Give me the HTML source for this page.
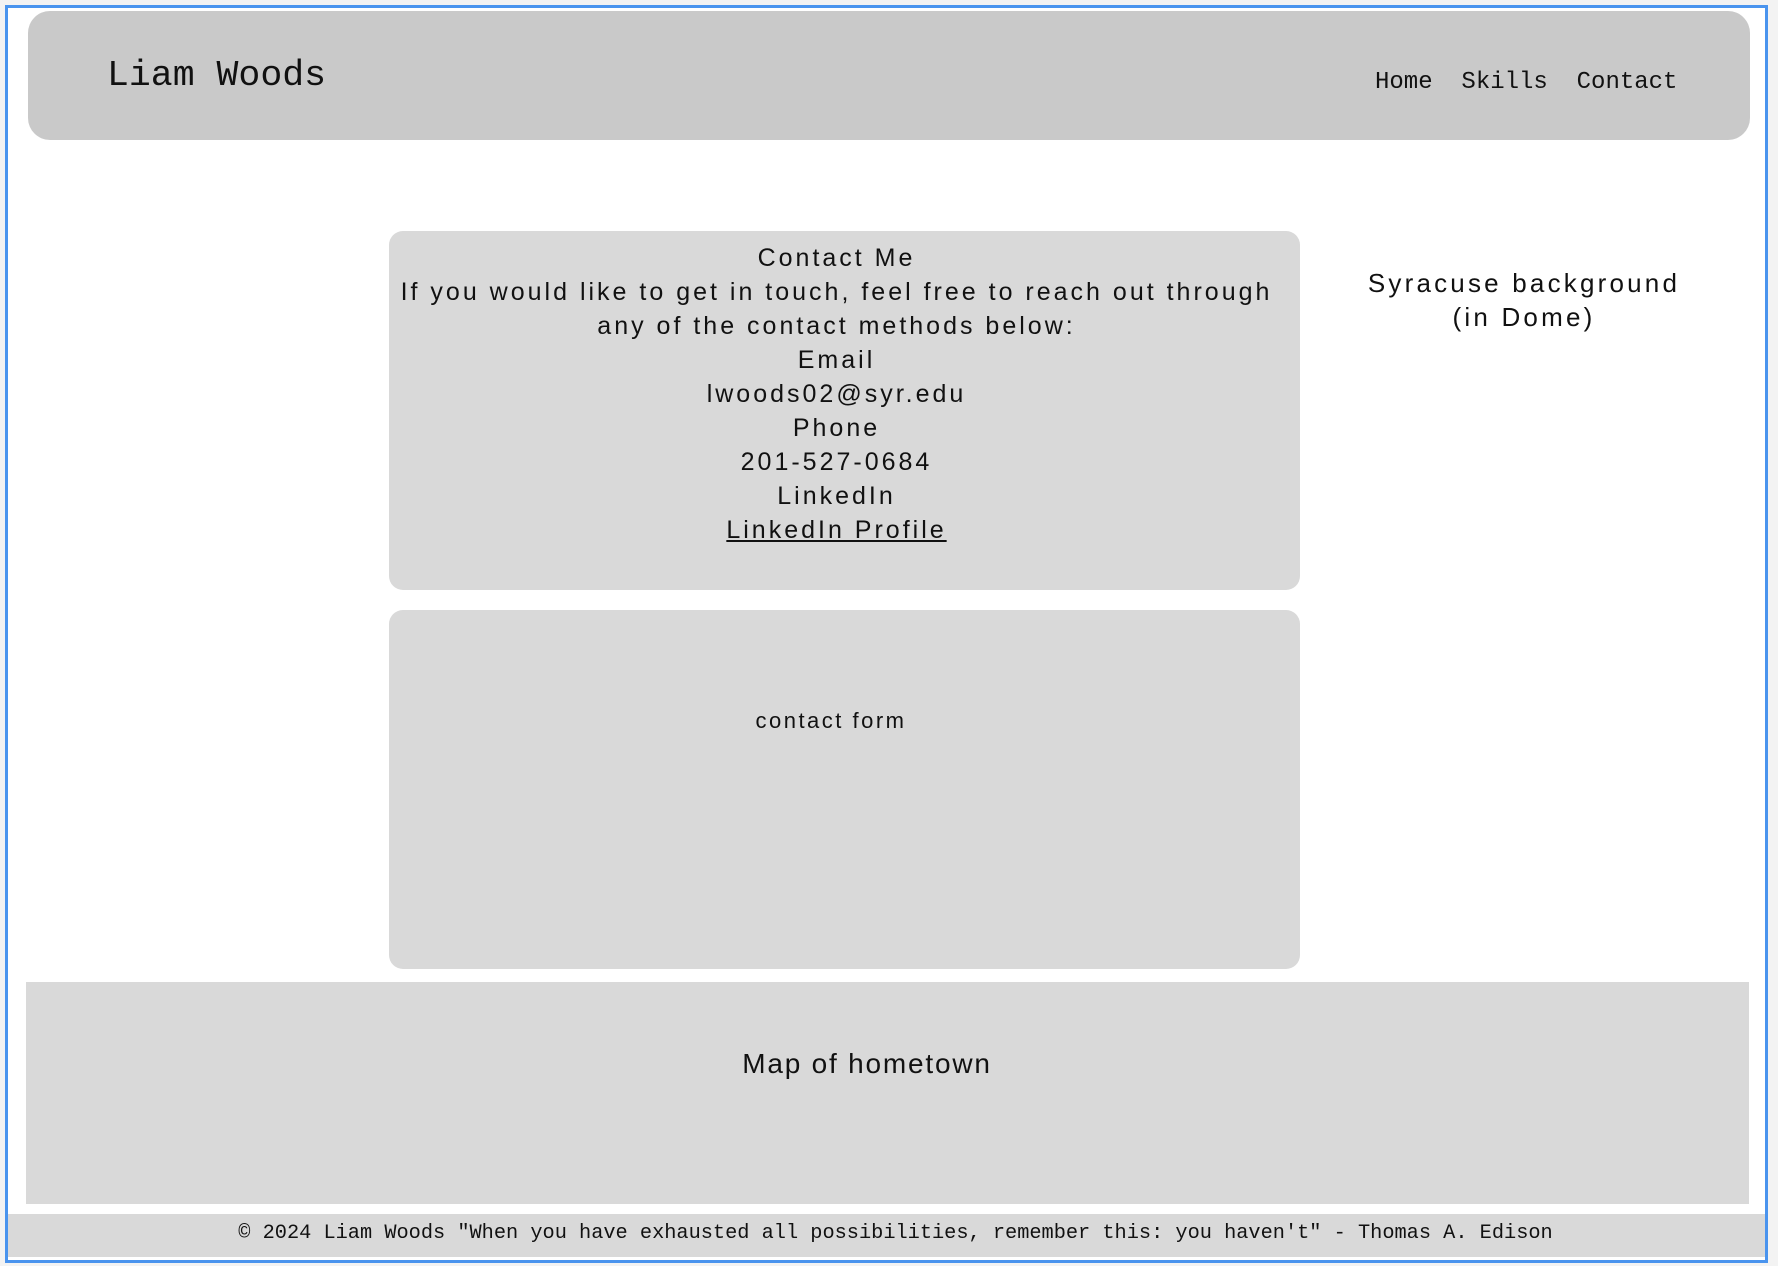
<!DOCTYPE html>
<html><head><meta charset="utf-8"><style>
html,body{margin:0;padding:0;background:#f3f3f3;width:1778px;height:1266px;overflow:hidden}
.frame{position:absolute;left:5px;top:5px;width:1757px;height:1252px;border:3px solid #4a94ee;background:#fff}
.abs{position:absolute}
.mono{font-family:"Liberation Mono",monospace;color:#111}
.sans{font-family:"Liberation Sans",sans-serif;color:#111}
</style></head><body>
<div class="frame"></div>
<div class="abs" style="left:28px;top:11px;width:1722px;height:129px;background:#c9c9c9;border-radius:22px"></div>
<div class="abs mono" style="left:107px;top:52px;font-size:36.5px;line-height:48px">Liam Woods</div>
<div class="abs mono" style="left:1375px;top:68px;font-size:24px;line-height:30px;white-space:pre">Home  Skills  Contact</div>

<div class="abs sans" style="left:389px;top:231px;width:911px;height:359px;background:#d9d9d9;border-radius:14px;text-align:center;font-size:25px;line-height:34px;letter-spacing:3px;padding-top:10px;padding-right:16px;box-sizing:border-box">
Contact Me<br>If you would like to get in touch, feel free to reach out through<br>any of the contact methods below:<br>Email<br>lwoods02@syr.edu<br>Phone<br>201-527-0684<br>LinkedIn<br><span style="text-decoration:underline">LinkedIn Profile</span>
</div>
<div class="abs sans" style="left:389px;top:610px;width:911px;height:359px;background:#d9d9d9;border-radius:14px"></div>
<div class="abs sans" style="left:631px;top:708px;width:400px;text-align:center;font-size:22px;letter-spacing:2.5px">contact form</div>
<div class="abs sans" style="left:1274px;top:266px;width:500px;text-align:center;font-size:26px;line-height:34px;letter-spacing:3.2px">Syracuse background<br>(in Dome)</div>
<div class="abs" style="left:26px;top:982px;width:1723px;height:222px;background:#d9d9d9"></div>
<div class="abs sans" style="left:617px;top:1048px;width:500px;text-align:center;font-size:28px;letter-spacing:1.8px">Map of hometown</div>
<div class="abs mono" style="left:8px;top:1214px;width:1757px;height:43px;background:#d9d9d9;text-align:center;font-size:20.3px;line-height:40px;padding-left:18px;box-sizing:border-box">© 2024 Liam Woods "When you have exhausted all possibilities, remember this: you haven't" - Thomas A. Edison</div>
</body></html>
